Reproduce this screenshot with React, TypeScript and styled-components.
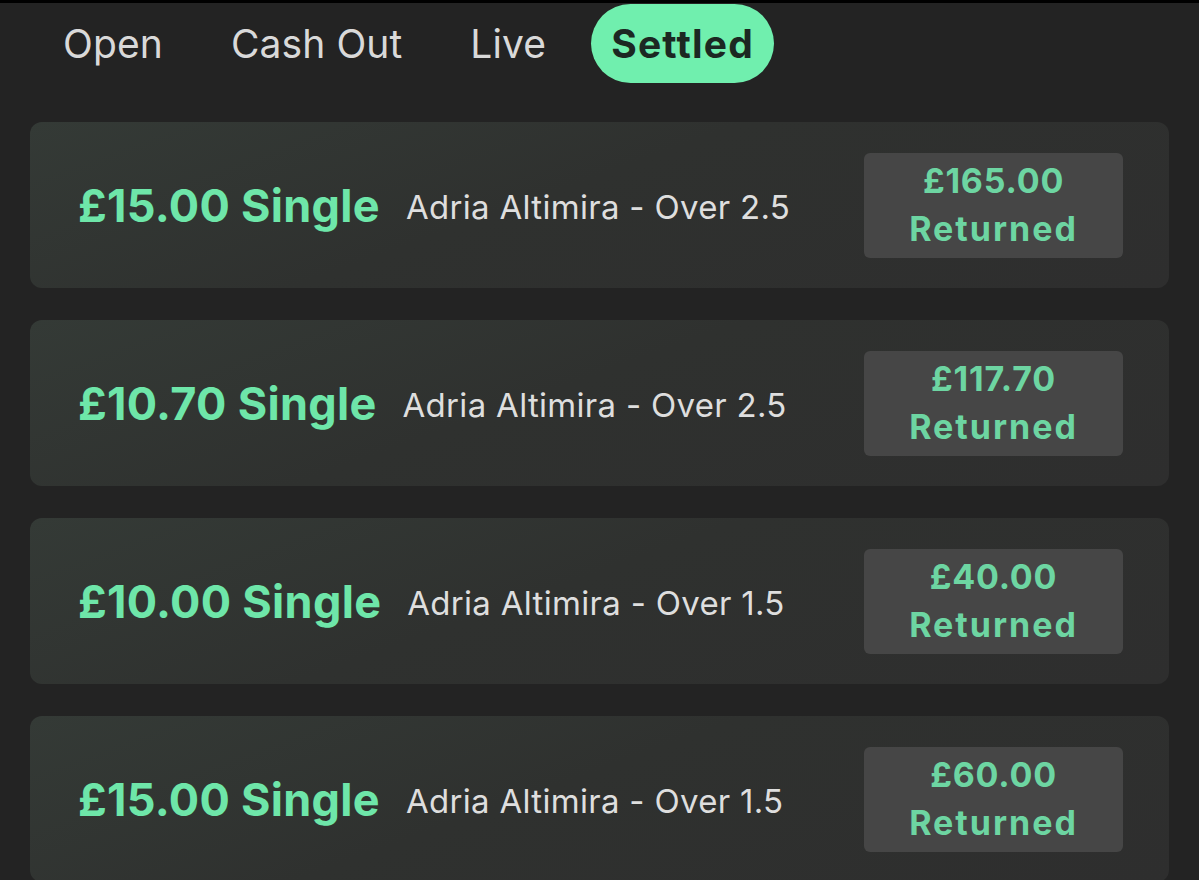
import React from "react";
import styled, { createGlobalStyle } from "styled-components";

const Global = createGlobalStyle`
  html, body { margin: 0; padding: 0; background: #232323; }
  body { font-family: Inter, "Noto Sans", "Liberation Sans", sans-serif; }
`;

const Page = styled.div`
  width: 1199px;
  height: 880px;
  overflow: hidden;
  background: #232323;
  border-top: 3px solid #000;
  box-sizing: border-box;
  display: flex;
  flex-direction: column;
`;

const Tabs = styled.nav`
  display: flex;
  align-items: center;
  gap: 28px;
  padding: 1px 0 0 43px;
  height: 79px;
`;

const Tab = styled.div<{ $active?: boolean }>`
  height: 79px;
  padding: 0 20px;
  margin-left: ${(p) => (p.$active ? "-3px" : "0")};
  display: flex;
  align-items: center;
  border-radius: 40px;
  font-size: 39px;
  letter-spacing: ${(p) => (p.$active ? "1.2px" : "0.1px")};
  font-weight: ${(p) => (p.$active ? 700 : 400)};
  color: ${(p) => (p.$active ? "#1c2822" : "#d9d9d9")};
  background: ${(p) => (p.$active ? "#70efae" : "transparent")};
`;

const List = styled.div`
  display: flex;
  flex-direction: column;
  gap: 32px;
  padding: 39px 30px 0 30px;
`;

const Card = styled.div`
  height: 166px;
  flex-shrink: 0;
  box-sizing: border-box;
  border-radius: 12px;
  background: linear-gradient(160deg, #343a36 0%, #2f312f 45%, #2e2e2e 100%);
  display: flex;
  align-items: center;
  padding: 0 46px 0 48px;
`;

const Stake = styled.div`
  font-size: 45px;
  font-weight: 700;
  color: #6ee6a9;
  letter-spacing: 0.3px;
  white-space: nowrap;
`;

const Selection = styled.div`
  margin-left: 26px;
  margin-top: 4px;
  font-size: 33px;
  letter-spacing: 0.3px;
  color: #dedede;
  white-space: nowrap;
  flex: 1;
`;

const Returned = styled.div`
  width: 259px;
  height: 105px;
  flex-shrink: 0;
  border-radius: 6px;
  background: #464646;
  display: flex;
  flex-direction: column;
  align-items: center;
  justify-content: center;
  font-size: 34px;
  font-weight: 700;
  line-height: 48px;
  color: #6dd5a2;
`;

const Line = styled.span<{ $spacing: number }>`
  letter-spacing: ${(p) => p.$spacing}px;
`;

const tabs = ["Open", "Cash Out", "Live", "Settled"];

const bets = [
  { stake: "£15.00", sel: "Adria Altimira - Over 2.5", ret: "£165.00" },
  { stake: "£10.70", sel: "Adria Altimira - Over 2.5", ret: "£117.70" },
  { stake: "£10.00", sel: "Adria Altimira - Over 1.5", ret: "£40.00" },
  { stake: "£15.00", sel: "Adria Altimira - Over 1.5", ret: "£60.00" },
];

export default function App() {
  return (
    <>
      <Global />
      <Page>
        <Tabs>
          {tabs.map((t) => (
            <Tab key={t} $active={t === "Settled"}>
              {t}
            </Tab>
          ))}
        </Tabs>
        <List>
          {bets.map((b, i) => (
            <Card key={i}>
              <Stake>{b.stake} Single</Stake>
              <Selection>{b.sel}</Selection>
              <Returned>
                <Line $spacing={0.8}>{b.ret}</Line>
                <Line $spacing={2}>Returned</Line>
              </Returned>
            </Card>
          ))}
        </List>
      </Page>
    </>
  );
}
